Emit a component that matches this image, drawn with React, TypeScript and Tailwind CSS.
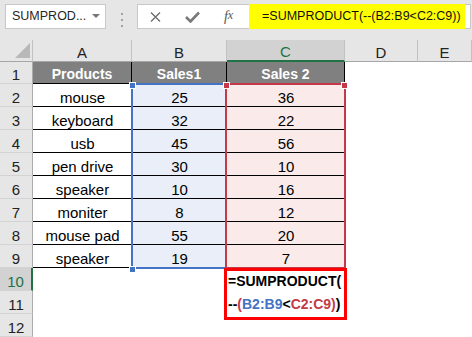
import React from "react";

type Item = { a: string; b: string; c: string };

const items: Item[] = [
  { a: "mouse", b: "25", c: "36" },
  { a: "keyboard", b: "32", c: "22" },
  { a: "usb", b: "45", c: "56" },
  { a: "pen drive", b: "30", c: "10" },
  { a: "speaker", b: "10", c: "16" },
  { a: "moniter", b: "8", c: "12" },
  { a: "mouse pad", b: "55", c: "20" },
  { a: "speaker", b: "19", c: "7" },
];

const cell = "flex items-end justify-center whitespace-nowrap leading-[17px] text-[15px]";
const rowHead =
  "flex w-[33px] shrink-0 items-end justify-center border-b border-r border-b-[#d3d3d3] border-r-[#ababab] bg-[#e6e6e6] leading-[17px] text-[15px] text-[#222]";

function ColHeads() {
  const head = "flex items-end justify-center border-b border-r border-b-[#a6a6a6] border-r-[#c2c2c2] leading-[17px] text-[15px] text-[#222]";
  return (
    <div className="flex h-[22px] bg-[#e6e6e6]">
      <div className="relative w-[33px] shrink-0 border-b border-r border-b-[#a6a6a6] border-r-[#c2c2c2]">
        <svg className="absolute bottom-[3px] right-[2px]" width="15" height="15">
          <polygon points="15,0 15,15 0,15" fill="#b8b8b8" />
        </svg>
      </div>
      <div className={`${head} w-[99px]`}>A</div>
      <div className={`${head} w-[95px]`}>B</div>
      <div className="flex w-[118px] items-end justify-center border-b-2 border-r border-b-[#217346] border-r-[#c2c2c2] bg-[#d2d2d2] leading-[16px] text-[15px] text-[#217346]">
        C
      </div>
      <div className={`${head} w-[73px]`}>D</div>
      <div className={`${head} flex-1`}>E</div>
    </div>
  );
}

function FormulaBar() {
  return (
    <div className="flex h-[40px] items-start bg-[#e6e6e6] pt-[4px]">
      <div className="ml-[5px] flex h-[25px] w-[101px] items-center justify-between border border-[#c8c8c8] bg-white pl-[6px] pr-[5px]">
        <span className="whitespace-nowrap text-[12.5px] text-[#262626]">SUMPROD...</span>
        <svg width="8" height="5">
          <polygon points="0,0 8,0 4,4" fill="#777" />
        </svg>
      </div>
      <div className="ml-[15px] mt-[9px] flex flex-col gap-[4px]">
        <span className="h-[2px] w-[2px] bg-[#a3a3a3]" />
        <span className="h-[2px] w-[2px] bg-[#a3a3a3]" />
        <span className="h-[2px] w-[2px] bg-[#a3a3a3]" />
      </div>
      <div className="ml-[14px] mr-[1px] flex h-[25px] flex-1 items-center border border-[#c8c8c8] bg-white">
        <div className="flex w-[35px] justify-center">
          <svg width="11" height="10" viewBox="0 0 11 10">
            <path d="M1 0.5 L10 9.5 M10 0.5 L1 9.5" stroke="#6e6e6e" strokeWidth="1.4" fill="none" />
          </svg>
        </div>
        <div className="flex w-[38px] justify-center">
          <svg width="15" height="12" viewBox="0 0 15 12">
            <path d="M1 6 L5.5 10.5 L14 1.5" stroke="#7a7a7a" strokeWidth="2.6" fill="none" />
          </svg>
        </div>
        <div className="flex w-[35px] justify-center font-['Liberation_Serif',serif] text-[14px] italic text-[#555]">
          f<span className="text-[12px]">x</span>
        </div>
        <div className="ml-[3px] flex h-[25px] w-[216px] items-center whitespace-nowrap bg-[#ffff00] pl-[13px] text-[12.5px] text-[#111]">
          =SUMPRODUCT(--(B2:B9&lt;C2:C9))
        </div>
      </div>
    </div>
  );
}

export default function App() {
  return (
    <div className="h-[337px] w-[472px] overflow-hidden bg-white font-['Liberation_Sans',Arial,sans-serif] text-black">
      <FormulaBar />
      <div className="relative">
        <ColHeads />

        <div className="flex h-[22px]">
          <div className={rowHead}>1</div>
          <div className="flex w-[99px] items-end justify-center border-b border-r border-black bg-[#808080] leading-[17px] text-[14px] font-bold text-white">
            Products
          </div>
          <div className="flex w-[95px] items-end justify-center border-b border-r border-black bg-[#808080] leading-[17px] text-[14px] font-bold text-white">
            Sales1
          </div>
          <div className="flex w-[118px] items-end justify-center border-b border-r border-black bg-[#808080] leading-[17px] text-[14px] font-bold text-white">
            Sales 2
          </div>
        </div>

        {items.map((it, i) => (
          <div key={i} className="flex h-[23px]">
            <div className={rowHead}>{i + 2}</div>
            <div className={`${cell} w-[99px] border-b border-black`}>{it.a}</div>
            <div className={`${cell} w-[95px] border-b border-black bg-[#e9eef8]`}>{it.b}</div>
            <div className={`${cell} w-[118px] border-b border-black bg-[#fbeaea]`}>{it.c}</div>
          </div>
        ))}

        <div className="flex h-[23px]">
          <div className="flex w-[33px] shrink-0 items-end justify-center border-b border-r-2 border-b-[#d3d3d3] border-r-[#217346] bg-[#d2d2d2] leading-[17px] text-[15px] text-[#217346]">
            10
          </div>
          <div className="w-[194px]" />
          <div className="flex w-[118px] items-end whitespace-nowrap pb-[1px] pl-[1px] text-[14px] font-bold leading-[17px]">
            =SUMPRODUCT(
          </div>
        </div>
        <div className="flex h-[23px]">
          <div className={rowHead}>11</div>
          <div className="w-[194px]" />
          <div className="flex w-[118px] items-end whitespace-nowrap pb-[1px] pl-[1px] text-[14px] font-bold leading-[17px]">
            <span>--</span>
            <span className="text-[#c23b48]">(</span>
            <span className="text-[#4472c4]">B2:B9</span>
            <span>&lt;</span>
            <span className="text-[#c23b48]">C2:C9)</span>
            <span>)</span>
          </div>
        </div>
        <div className="flex h-[23px]">
          <div className={rowHead}>12</div>
        </div>

        {/* range highlights */}
        <div className="pointer-events-none absolute left-[131px] top-[43px] h-[186px] w-[96px] border-2 border-[#4472c4]" />
        <div className="pointer-events-none absolute left-[225px] top-[43px] h-[186px] w-[121px] border-2 border-[#c4394a]" />
        <div className="absolute left-[129px] top-[42px] h-[7px] w-[7px] border border-white bg-[#4472c4]" />
        <div className="absolute left-[129px] top-[226px] h-[7px] w-[7px] border border-white bg-[#4472c4]" />
        <div className="absolute left-[223px] top-[42px] h-[7px] w-[7px] border border-white bg-[#c4394a]" />
        <div className="absolute left-[341px] top-[42px] h-[7px] w-[7px] border border-white bg-[#c4394a]" />

        {/* callout box */}
        <div className="pointer-events-none absolute left-[224px] top-[228px] h-[52px] w-[123px] border-[3px] border-[#ff0000]" />
      </div>
    </div>
  );
}
